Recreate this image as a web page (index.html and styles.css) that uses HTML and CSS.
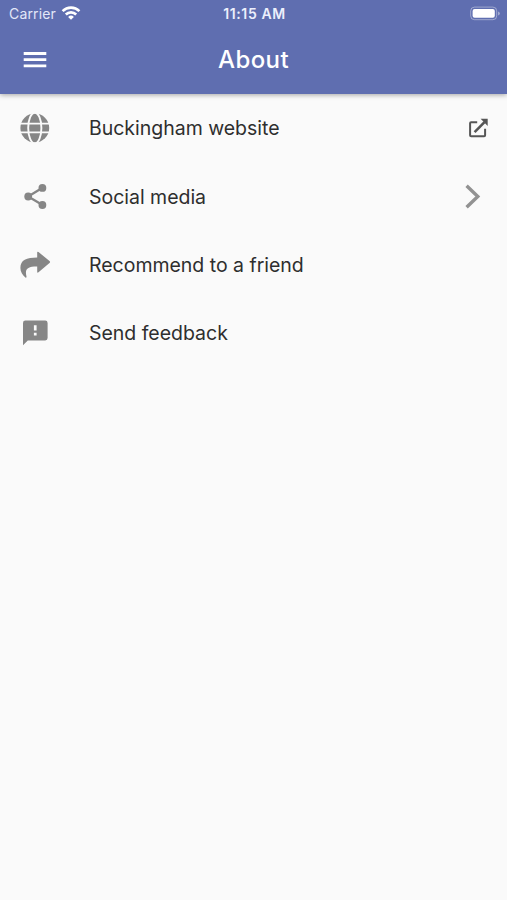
FILE: index.html
```html
<!DOCTYPE html>
<html lang="en">
<head>
<meta charset="utf-8">
<title>About</title>
<link rel="stylesheet" href="styles.css">
</head>
<body>
<header class="header">
  <div class="status">
    <div class="carrier"><span>Carrier</span>
      <svg class="wifi" width="20" height="16" viewBox="0 0 20 16" fill="none" stroke="#fff" stroke-width="2.6"><path d="M1.6 6.1a12 12 0 0 1 16.8 0M4.8 9.5a7.4 7.4 0 0 1 10.4 0"/><path d="M10 14.8 7.1 11.9a4.2 4.2 0 0 1 5.8 0z" fill="#fff" stroke="none"/></svg>
    </div>
    <div class="time">11:15 AM</div>
    <div class="battery"><svg width="30" height="16" viewBox="0 0 30 16"><rect x=".7" y="1.1" width="26" height="12.6" rx="3.8" fill="none" stroke="#fff" stroke-opacity=".4"/><rect x="2.6" y="3" width="22.2" height="8.8" rx="2" fill="#fff"/><path d="M28.2 5.5v4q1.5-.7 1.5-2t-1.5-2z" fill="#fff" fill-opacity=".5"/></svg></div>
  </div>
  <div class="bar">
    <svg class="menu" width="24" height="18" viewBox="0 0 24 18" fill="#fff"><path d="M.7 1.1h22.6v2.8H.7zM.7 7.3h22.6v2.8H.7zM.7 13.4h22.6v2.8H.7z"/></svg>
    <h1>About</h1>
  </div>
</header>
<main class="list">
  <div class="row">
    <svg class="icon" viewBox="15 -20 40 40"><circle cx="34.8" cy="0" r="14.4" fill="#868686"/><g fill="none" stroke="#fafafa" stroke-width="1.9"><path d="M19-4.4h32M19 4.4h32"/><ellipse cx="34.8" cy="0" rx="6.6" ry="15.3"/></g></svg>
    <span class="label">Buckingham website</span>
    <svg class="end" viewBox="460 -20 40 40" fill="none" stroke="#555" stroke-width="2"><path d="M477.2-5.8h-6.1q-1 0-1 1V7.3q0 1 1 1h13q1 0 1-1V.7"/><path d="M474.6 4.2 484.5-5.8" stroke-width="2.6"/><path d="M480.6-9.2h7.1v7.1z" fill="#555" stroke="none"/></svg>
  </div>
  <div class="row">
    <svg class="icon" viewBox="15 -19.5 40 40" fill="#868686"><path d="M42.5-8.7 28.2 0 42.5 8.5" fill="none" stroke="#868686" stroke-width="2.3"/><circle cx="42.4" cy="-8.6" r="3.9"/><circle cx="28.2" cy="0" r="3.9"/><circle cx="42.4" cy="8.5" r="3.9"/></svg>
    <span class="label">Social media</span>
    <svg class="end" viewBox="460 -19.5 40 40" fill="none" stroke="#929292" stroke-width="3.4"><path d="M466.6-10.8 477.8 0 466.6 10.8"/></svg>
  </div>
  <div class="row">
    <svg class="icon" viewBox="15 -20 40 40" fill="#868686"><path d="M37.2-12.4q0-1.5 1.3-.6l11 9q1.2 1 0 2l-11 9.3q-1.3.9-1.3-.6V1.6C27.6 1.5 24.6 4 26.5 11.4q.2 1.8-1.1 1C22.5 10 20.4 6.6 20.4 3c0-8 6.2-10.3 16.8-10.4z"/></svg>
    <span class="label">Recommend to a friend</span>
  </div>
  <div class="row">
    <svg class="icon" viewBox="15 -20.3 40 40"><path d="M25.4-12.8h19.8q2.4 0 2.4 2.4V4.7q0 2.4-2.4 2.4H27.8L23 11.9v-22.3q0-2.4 2.4-2.4z" fill="#868686"/><path d="M33.9-8h2.7v5.2h-2.7zM33.9-.5h2.7v2.7h-2.7z" fill="#fafafa"/></svg>
    <span class="label">Send feedback</span>
  </div>
</main>
</body>
</html>
```
FILE: styles.css
```css
* {
  box-sizing: border-box;
}

body {
  margin: 0;
  min-height: 900px;
  background: #fafafa;
  color: #2e2e2e;
  font-family: Inter, "Liberation Sans", sans-serif;
}

.header {
  height: 94px;
  background: #5f6eb0;
  color: #fff;
  box-shadow: 0 1px 5px rgba(0, 0, 0, .35);
}

.status {
  display: grid;
  grid-template-columns: 1fr auto 1fr;
  align-items: center;
  height: 27px;
  padding: 0 7px 0 9px;
}

.carrier {
  display: flex;
  align-items: center;
  gap: 5px;
  font-size: 14px;
  letter-spacing: .15px;
  color: #e3e7f8;
}

.wifi {
  margin-top: -2px;
}

.time {
  font-size: 14px;
  font-weight: 600;
  letter-spacing: .6px;
  color: #eceffc;
}

.battery {
  display: flex;
  justify-content: flex-end;
}

.bar {
  display: grid;
  grid-template-columns: 48px 1fr 48px;
  align-items: center;
  height: 66px;
}

.menu {
  margin-left: 23px;
}

h1 {
  margin: 0;
  text-align: center;
  font-size: 24px;
  font-weight: 500;
  line-height: 30px;
  letter-spacing: .4px;
}

.row {
  display: flex;
  align-items: center;
  height: 68.4px;
  padding: 0 7px 0 15px;
}

.icon,
.end {
  flex: none;
  width: 40px;
  height: 40px;
}

.label {
  flex: 1;
  margin-left: 34px;
  font-size: 19.5px;
  letter-spacing: -.02px;
}
```
